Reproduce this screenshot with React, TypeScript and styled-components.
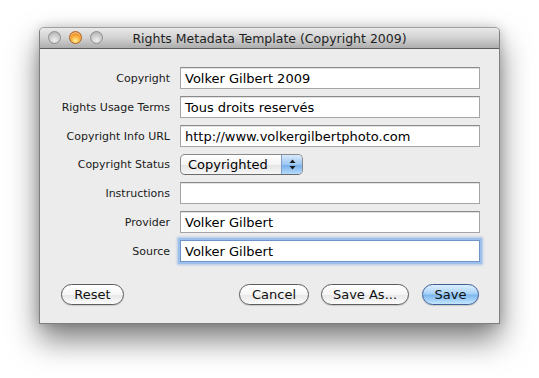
import React from "react";
import styled, { createGlobalStyle, css } from "styled-components";

const Global = createGlobalStyle`
  html, body { margin: 0; padding: 0; background: #ffffff; }
  body { font-family: "DejaVu Sans", "Liberation Sans", sans-serif; }
`;

const Page = styled.div`
  width: 539px;
  height: 378px;
  padding: 27px 0 0 39px;
  box-sizing: border-box;
  overflow: hidden;
`;

const Window = styled.div`
  width: 461px;
  height: 297px;
  box-sizing: border-box;
  border: 1px solid #7e7e7e;
  border-top-color: #a0a0a0;
  border-radius: 5px 5px 0 0;
  background: #ececec;
  box-shadow: 0 16px 30px rgba(0, 0, 0, 0.5), 0 0 12px rgba(0, 0, 0, 0.18);
  display: flex;
  flex-direction: column;
  overflow: hidden;
`;

const TitleBar = styled.div`
  height: 20px;
  flex: none;
  position: relative;
  display: flex;
  align-items: center;
  justify-content: center;
  background: linear-gradient(#e9e9e9, #d2d2d2 50%, #adadad);
  border-bottom: 1px solid #5e5e5e;
  font-size: 12.5px;
  color: #1e1e1e;
`;

const Lights = styled.div`
  position: absolute;
  left: 8px;
  top: 3px;
  display: flex;
  gap: 8px;
`;

const Light = styled.span<{ $active?: boolean }>`
  width: 13px;
  height: 13px;
  border-radius: 50%;
  box-sizing: border-box;
  ${(p) =>
    p.$active
      ? css`
          border: 1px solid #b0601a;
          background: radial-gradient(circle at 50% 80%, #fff09a 0%, #fbae3a 45%, #e06a12 100%);
          box-shadow: inset 0 1px 1px rgba(255, 255, 255, 0.6);
        `
      : css`
          border: 1px solid #8f8f8f;
          background: radial-gradient(circle at 50% 75%, #efefef 0%, #cdcdcd 50%, #a9a9a9 100%);
        `}
`;

const Body = styled.div`
  flex: 1;
  display: flex;
  flex-direction: column;
  padding: 18px 20px 18px 21px;
`;

const Form = styled.div`
  display: grid;
  grid-template-columns: 109px 300px;
  column-gap: 10px;
  row-gap: 7px;
  align-items: center;
`;

const Label = styled.label`
  font-size: 11px;
  color: #1a1a1a;
  text-align: right;
  white-space: nowrap;
`;

const Field = styled.div<{ $focus?: boolean }>`
  height: 22px;
  box-sizing: border-box;
  border: 1px solid #a5a5a5;
  border-top-color: #8a8a8a;
  background: #ffffff;
  box-shadow: inset 0 1px 0 #e2e2e2;
  font-size: 13px;
  color: #000;
  padding: 0 0 0 4px;
  display: flex;
  align-items: center;
  white-space: nowrap;
  ${(p) =>
    p.$focus &&
    css`
      border-color: #6f95c8;
      box-shadow: 0 0 0 2px #9cc0ec, 0 0 2px 3px rgba(120, 160, 220, 0.5);
    `}
`;

const Popup = styled.div`
  width: 123px;
  height: 21px;
  box-sizing: border-box;
  border: 1px solid #8a8a8a;
  border-bottom-color: #6a6a6a;
  border-radius: 5px;
  background: linear-gradient(#ffffff, #f4f4f4 50%, #e4e4e4 51%, #f6f6f6);
  display: flex;
  align-items: center;
  overflow: hidden;
  font-size: 13px;
  color: #000;
`;

const PopupText = styled.span`
  flex: 1;
  padding-left: 7px;
`;

const PopupArrows = styled.span`
  width: 20px;
  align-self: stretch;
  border-left: 1px solid #7f9fc8;
  background: linear-gradient(#d8e9fb, #9cc6f2 50%, #74aeea 51%, #b6dafb);
  display: flex;
  align-items: center;
  justify-content: center;
`;

const Buttons = styled.div`
  margin-top: auto;
  display: flex;
  align-items: center;
`;

const Button = styled.button<{ $default?: boolean; $w: number; $gap?: number }>`
  width: ${(p) => p.$w}px;
  height: 21px;
  margin-left: ${(p) => p.$gap ?? 0}px;
  box-sizing: border-box;
  border: 1px solid #5c5c5c;
  border-radius: 11px;
  font-family: "DejaVu Sans", "Liberation Sans", sans-serif;
  font-size: 13px;
  color: #111;
  padding: 0;
  background: linear-gradient(#ffffff, #f6f6f6 50%, #e7e7e7 51%, #fbfbfb);
  box-shadow: 0 1px 1px rgba(0, 0, 0, 0.15);
  ${(p) =>
    p.$default &&
    css`
      border-color: #3f5f95;
      background: linear-gradient(#dcefff, #a6d0f8 48%, #7ab6f0 52%, #c4e6ff);
    `}
`;

const Spacer = styled.div`
  flex: 1;
`;

const rows: { label: string; value?: string; popup?: boolean; focus?: boolean }[] = [
  { label: "Copyright", value: "Volker Gilbert 2009" },
  { label: "Rights Usage Terms", value: "Tous droits reservés" },
  { label: "Copyright Info URL", value: "http://www.volkergilbertphoto.com" },
  { label: "Copyright Status", popup: true },
  { label: "Instructions", value: "" },
  { label: "Provider", value: "Volker Gilbert" },
  { label: "Source", value: "Volker Gilbert", focus: true },
];

export default function App() {
  return (
    <Page>
      <Global />
      <Window>
        <TitleBar>
          <Lights>
            <Light />
            <Light $active />
            <Light />
          </Lights>
          Rights Metadata Template (Copyright 2009)
        </TitleBar>
        <Body>
          <Form>
            {rows.map((r) => (
              <React.Fragment key={r.label}>
                <Label>{r.label}</Label>
                {r.popup ? (
                  <Popup>
                    <PopupText>Copyrighted</PopupText>
                    <PopupArrows>
                      <svg width="7" height="11" viewBox="0 0 7 11">
                        <path d="M3.5 0.5 L6.5 4 L0.5 4 Z" fill="#1a1a1a" />
                        <path d="M0.5 7 L6.5 7 L3.5 10.5 Z" fill="#1a1a1a" />
                      </svg>
                    </PopupArrows>
                  </Popup>
                ) : (
                  <Field $focus={r.focus}>{r.value}</Field>
                )}
              </React.Fragment>
            ))}
          </Form>
          <Buttons>
            <Button $w={63}>Reset</Button>
            <Spacer />
            <Button $w={70}>Cancel</Button>
            <Button $w={88} $gap={12}>Save As...</Button>
            <Button $w={57} $gap={13} $default>
              Save
            </Button>
          </Buttons>
        </Body>
      </Window>
    </Page>
  );
}
